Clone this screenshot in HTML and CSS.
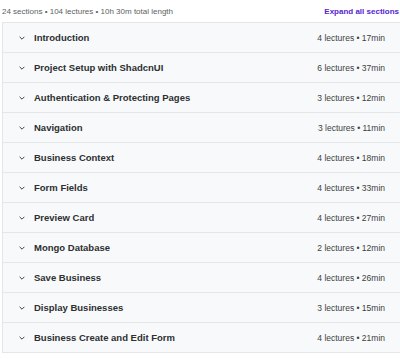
FILE: index.html
```html
<!DOCTYPE html>
<html lang="en">
  <head>
    <meta charset="UTF-8" />
    <title>Course content</title>
    <link rel="stylesheet" href="styles.css">
  </head>
  <body>
    <div class="curriculum">
      <div class="summary">
        <span>24 sections • 104 lectures • 10h 30m total length</span>
        <button class="expand-all">Expand all sections</button>
      </div>

      <div class="sections">
        <div class="section">
          <span class="chevron"><svg viewBox="0 0 10 6"><path d="M1 1l4 4 4-4" /></svg></span>
          <span class="title">Introduction</span>
          <span class="meta">4 lectures • 17min</span>
        </div>
        <div class="section">
          <span class="chevron"><svg viewBox="0 0 10 6"><path d="M1 1l4 4 4-4" /></svg></span>
          <span class="title">Project Setup with ShadcnUI</span>
          <span class="meta">6 lectures • 37min</span>
        </div>
        <div class="section">
          <span class="chevron"><svg viewBox="0 0 10 6"><path d="M1 1l4 4 4-4" /></svg></span>
          <span class="title">Authentication &amp; Protecting Pages</span>
          <span class="meta">3 lectures • 12min</span>
        </div>
        <div class="section">
          <span class="chevron"><svg viewBox="0 0 10 6"><path d="M1 1l4 4 4-4" /></svg></span>
          <span class="title">Navigation</span>
          <span class="meta">3 lectures • 11min</span>
        </div>
        <div class="section">
          <span class="chevron"><svg viewBox="0 0 10 6"><path d="M1 1l4 4 4-4" /></svg></span>
          <span class="title">Business Context</span>
          <span class="meta">4 lectures • 18min</span>
        </div>
        <div class="section">
          <span class="chevron"><svg viewBox="0 0 10 6"><path d="M1 1l4 4 4-4" /></svg></span>
          <span class="title">Form Fields</span>
          <span class="meta">4 lectures • 33min</span>
        </div>
        <div class="section">
          <span class="chevron"><svg viewBox="0 0 10 6"><path d="M1 1l4 4 4-4" /></svg></span>
          <span class="title">Preview Card</span>
          <span class="meta">4 lectures • 27min</span>
        </div>
        <div class="section">
          <span class="chevron"><svg viewBox="0 0 10 6"><path d="M1 1l4 4 4-4" /></svg></span>
          <span class="title">Mongo Database</span>
          <span class="meta">2 lectures • 12min</span>
        </div>
        <div class="section">
          <span class="chevron"><svg viewBox="0 0 10 6"><path d="M1 1l4 4 4-4" /></svg></span>
          <span class="title">Save Business</span>
          <span class="meta">4 lectures • 26min</span>
        </div>
        <div class="section">
          <span class="chevron"><svg viewBox="0 0 10 6"><path d="M1 1l4 4 4-4" /></svg></span>
          <span class="title">Display Businesses</span>
          <span class="meta">3 lectures • 15min</span>
        </div>
        <div class="section">
          <span class="chevron"><svg viewBox="0 0 10 6"><path d="M1 1l4 4 4-4" /></svg></span>
          <span class="title">Business Create and Edit Form</span>
          <span class="meta">4 lectures • 21min</span>
        </div>
      </div>
    </div>
  </body>
</html>
```

FILE: styles.css
```css
body {
  margin: 0;
  background: #ffffff;
  font-family: "Liberation Sans", Arial, sans-serif;
  color: #2d2f31;
  overflow: hidden;
}

.curriculum {
  padding-left: 2px;
}

.summary {
  display: flex;
  justify-content: space-between;
  align-items: center;
  height: 22px;
  padding-right: 1px;
  font-size: 8px;
  color: #5a5f63;
}

.expand-all {
  background: none;
  border: none;
  padding: 0;
  font-family: inherit;
  font-size: 8px;
  font-weight: bold;
  color: #5624d0;
  cursor: pointer;
}

.sections {
  border-top: 1px solid #e4e6e8;
  border-left: 1px solid #e4e6e8;
}

.section {
  display: flex;
  align-items: center;
  height: 29px;
  padding: 0 15px 0 16px;
  background: #f7f9fa;
  border-bottom: 1px solid #e4e6e8;
}

.chevron {
  display: flex;
  width: 15px;
}

.chevron svg {
  width: 6px;
  height: 4px;
  fill: none;
  stroke: #2d2f31;
  stroke-width: 1.5;
}

.title {
  flex: 1;
  font-size: 9.5px;
  font-weight: bold;
}

.meta {
  font-size: 8.5px;
  color: #3d3f41;
}
```
